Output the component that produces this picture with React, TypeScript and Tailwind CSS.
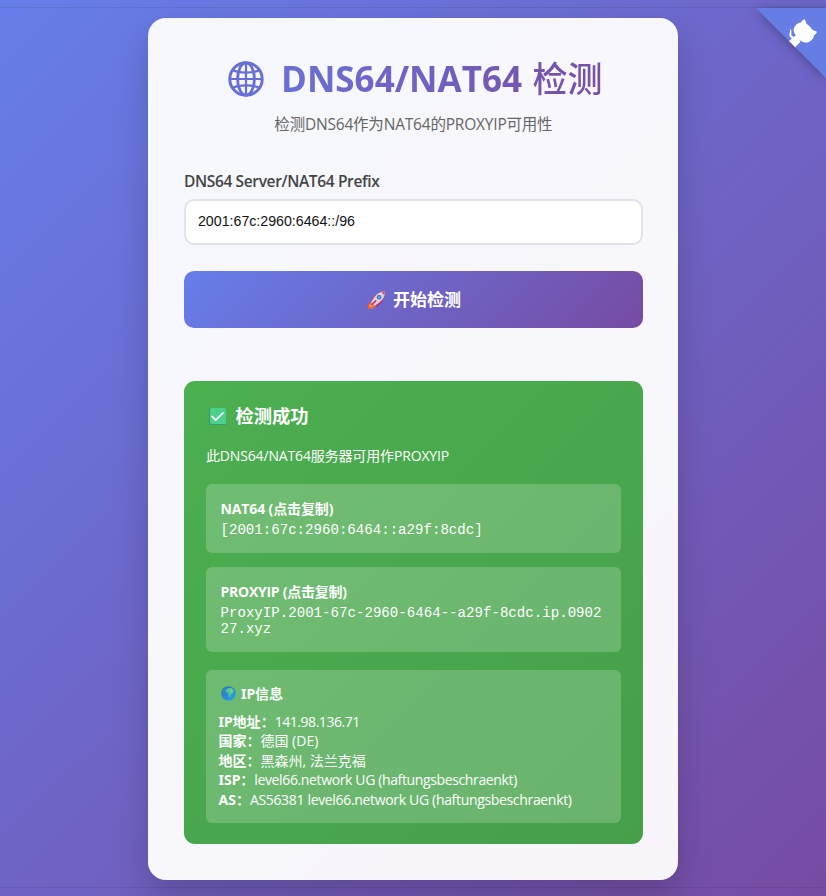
import type { ReactNode } from "react";

function GlobeOutline() {
  return (
    <svg viewBox="0 0 36 36" className="h-9 w-9 shrink-0" fill="none" stroke="#676fd6">
      <circle cx="18" cy="18" r="16.2" strokeWidth="3" />
      <ellipse cx="18" cy="18" rx="8.4" ry="16.2" strokeWidth="2.8" />
      <path d="M18 1.500v33M1.500 18h33" strokeWidth="2.200" />
      <path d="M4.500 9c3.500 1.900 8 2.600 13.500 2.600S28 10.900 31.500 9M4.500 27c3.500-1.900 8-2.600 13.500-2.600s10 .7 13.500 2.600" strokeWidth="2.300" />
    </svg>
  );
}

function Rocket() {
  return (
    <svg viewBox="0.500 1 17.500 18" className="h-5 w-5 shrink-0">
      <path d="M5 9l4-3.500 3 1-4 6z" fill="#d9305c" />
      <path d="M10 16l5-4.500-1-3.500-6 5z" fill="#c32a5c" />
      <path d="M1.500 17.800l1-4.500 3-2 3.500 3.500-2.500 3.200z" fill="#f0653c" />
      <path d="M3.500 16l1-2.500 2.500 2z" fill="#ffc24a" />
      <path d="M5 12.500C7 6.500 12 2.500 17 2.200c.8 5-3 10-9 13z" fill="#d5d3e8" />
      <path d="M14 2.900c.9-.4 2-.7 3-.7.200 1.300 0 2.500-.4 3.500z" fill="#e94672" />
      <circle cx="12" cy="7.500" r="2" fill="#5b5c9c" />
      <circle cx="12" cy="7.500" r="1.100" fill="#67a9e0" />
      <path d="M5.500 14.300l3.500-3.500" stroke="#d9305c" strokeWidth="1.500" strokeLinecap="round" />
    </svg>
  );
}

function CheckBox() {
  return (
    <svg viewBox="0 0 17 17" className="h-[17px] w-[17px] shrink-0">
      <rect width="17" height="17" rx="1.500" fill="#2f9f6b" />
      <rect x="1" width="16" height="16" rx="1.500" fill="#4bd18c" />
      <path d="M3 8.400l3.700 3.700L14 4.900" fill="none" stroke="#fff" strokeWidth="1.700" strokeLinecap="round" />
    </svg>
  );
}

function Earth() {
  return (
    <svg viewBox="0 0 16 16" className="h-[15px] w-[15px] shrink-0">
      <defs>
        <linearGradient id="sea" x1="0" y1="0" x2="1" y2="1">
          <stop offset="0" stopColor="#2c6fb4" />
          <stop offset="1" stopColor="#27a5ee" />
        </linearGradient>
      </defs>
      <circle cx="8" cy="8" r="7.800" fill="url(#sea)" />
      <path d="M5.500 3.500c2-1.500 4-1.800 5.800-1l2 2-.5 3.600-2.300 1.400-.8 2.800-1.800-1.500.2-2.800L5 6z" fill="#4fc4a0" />
      <path d="M9 3l3 .2 1 2-2 1.600-2-1.300z" fill="#74cf7c" />
      <path d="M2 4.500l1.800-1.700.5 2L2.700 7z" fill="#3f9f9c" />
    </svg>
  );
}

function GithubCorner() {
  return (
    <svg
      viewBox="0 0 250 250"
      className="absolute right-0 top-2 h-[70.500px] w-[70.500px] overflow-visible drop-shadow-[0_2px_6px_rgba(0,0,0,0.28)]"
    >
      <path d="M0,0 L115,115 L130,115 L142,142 L250,250 L250,0 Z" fill="#667ee4" />
      <path
        d="M128.3,109.0 C113.8,99.7 119.0,89.6 119.0,89.6 C122.0,82.7 120.5,78.6 120.5,78.6 C119.2,72.0 123.4,76.3 123.4,76.3 C127.3,80.9 125.5,87.3 125.5,87.3 C122.9,97.6 130.6,101.9 134.4,103.2"
        fill="#fff"
      />
      <path
        d="M115.0,115.0 C114.9,115.1 118.7,116.5 119.8,115.4 L133.7,101.6 C136.9,99.2 139.9,98.4 142.2,98.6 C133.8,88.0 127.5,74.4 143.8,58.0 C148.5,53.4 154.0,51.2 159.7,51.0 C160.3,49.4 163.2,43.6 171.4,40.1 C171.4,40.1 176.1,42.5 178.8,56.2 C183.1,58.6 187.2,61.8 190.9,65.4 C194.5,69.0 197.7,73.2 200.1,77.6 C213.8,80.2 216.3,84.9 216.3,84.9 C212.7,93.1 206.9,96.0 205.4,96.6 C205.1,102.4 203.0,107.8 198.3,112.5 C181.9,128.9 168.3,122.5 157.7,114.1 C157.9,116.9 156.7,120.9 152.7,124.9 L141.0,136.5 C139.8,137.7 141.6,141.9 141.8,141.8 Z"
        fill="#fff"
      />
    </svg>
  );
}

function Row({ label, children }: { label: string; children: ReactNode }) {
  return (
    <div className="flex h-[19.500px] items-center">
      <b className="font-['Noto_Sans','Noto_Sans_CJK_SC',sans-serif] font-bold">{label}：</b>
      {children}
    </div>
  );
}

export default function App() {
  return (
    <div className="relative h-[896px] w-[826px] overflow-hidden whitespace-nowrap bg-[linear-gradient(135deg,#667eea_0%,#764ba2_100%)] pt-[7px] font-['Open_Sans','Noto_Sans_CJK_SC',sans-serif]">
      <div className="h-[881px] border-y border-black/8 pt-[9.500px]">
        <main className="ml-[148.400px] h-[862px] w-[530px] rounded-[18px] bg-[#fffffff2] px-[35.600px] pt-[36px] shadow-[0_18px_36px_rgba(0,0,0,0.18)]">
          <h1 className="flex h-[50px] items-center pl-[44.500px] text-[35px] font-bold">
            <GlobeOutline />
            <span className="ml-[16.500px] bg-[linear-gradient(90deg,#6a70d6,#774fa5)] bg-clip-text leading-[50px] text-transparent">
              DNS64/NAT64 <span className="ml-[1.500px] font-medium">检测</span>
            </span>
          </h1>
          <p className="mt-[8px] h-6 text-center text-[15.500px] leading-6 tracking-[-0.200px] text-[#666]">
            检测DNS64作为NAT64的PROXYIP可用性
          </p>
          <label className="mt-[33px] block h-6 text-[15.500px] font-semibold leading-6 tracking-[-0.360px] text-[#444]">
            DNS64 Server/NAT64 Prefix
          </label>
          <div className="mt-[6.500px] flex h-[46px] w-[459px] items-center rounded-[10px] border-2 border-[#e1e3ea] bg-white px-3 font-['Liberation_Sans',sans-serif] text-[14.200px] text-[#111]">
            2001:67c:2960:6464::/96
          </div>
          <button className="mt-[26px] flex h-[57px] w-[459px] items-center rounded-[10px] bg-[linear-gradient(135deg,#667eea,#764ba2)] pl-[182px] text-[17px] font-bold text-white">
            <Rocket />
            <span className="ml-[7px]">开始检测</span>
          </button>
          <section className="mt-[53px] h-[463px] w-[459px] rounded-[11px] bg-[linear-gradient(135deg,#4caf50,#45a049)] px-[22px] pt-[21px] text-[14px] text-white">
            <h2 className="flex h-7 items-center pl-[3.500px] text-[18.300px] font-bold">
              <CheckBox />
              <span className="ml-[9px]">检测成功</span>
            </h2>
            <p className="mt-[16px] h-5 leading-5 tracking-[-0.150px]">此DNS64/NAT64服务器可用作PROXYIP</p>
            <div className="mt-[18px] h-[69px] rounded-md bg-white/20 px-[14.500px] pt-[15px]">
              <div className="h-5 font-bold leading-5 tracking-[-0.120px]">NAT64 (点击复制)</div>
              <div className="mt-[3px] font-['Liberation_Mono',monospace] text-[14.100px] leading-4">
                [2001:67c:2960:6464::a29f:8cdc]
              </div>
            </div>
            <div className="mt-[14px] h-[85px] rounded-md bg-white/20 px-[14.500px] pt-[15px]">
              <div className="h-5 font-bold leading-5 tracking-[-0.250px]">PROXYIP (点击复制)</div>
              <div className="mt-[3px] font-['Liberation_Mono',monospace] text-[14.120px] leading-4">
                ProxyIP.2001-67c-2960-6464--a29f-8cdc.ip.0902
                <br />
                27.xyz
              </div>
            </div>
            <div className="mt-[18px] h-[152.500px] rounded-md bg-white/20 px-[12.500px] pt-[13px]">
              <div className="mb-[8.500px] flex h-5 items-center pl-[2.500px] font-['Noto_Sans','Noto_Sans_CJK_SC',sans-serif] font-bold">
                <Earth />
                <span className="ml-[5px]">IP信息</span>
              </div>
              <Row label="IP地址">
                <span className="tracking-[-0.450px]">141.98.136.71</span>
              </Row>
              <Row label="国家">德国 (DE)</Row>
              <Row label="地区">黑森州, 法兰克福</Row>
              <Row label="ISP">
                <span className="tracking-[-0.370px]">level66.network UG (haftungsbeschraenkt)</span>
              </Row>
              <Row label="AS">
                <span className="tracking-[-0.330px]">AS56381 level66.network UG (haftungsbeschraenkt)</span>
              </Row>
            </div>
          </section>
        </main>
      </div>
      <GithubCorner />
    </div>
  );
}
